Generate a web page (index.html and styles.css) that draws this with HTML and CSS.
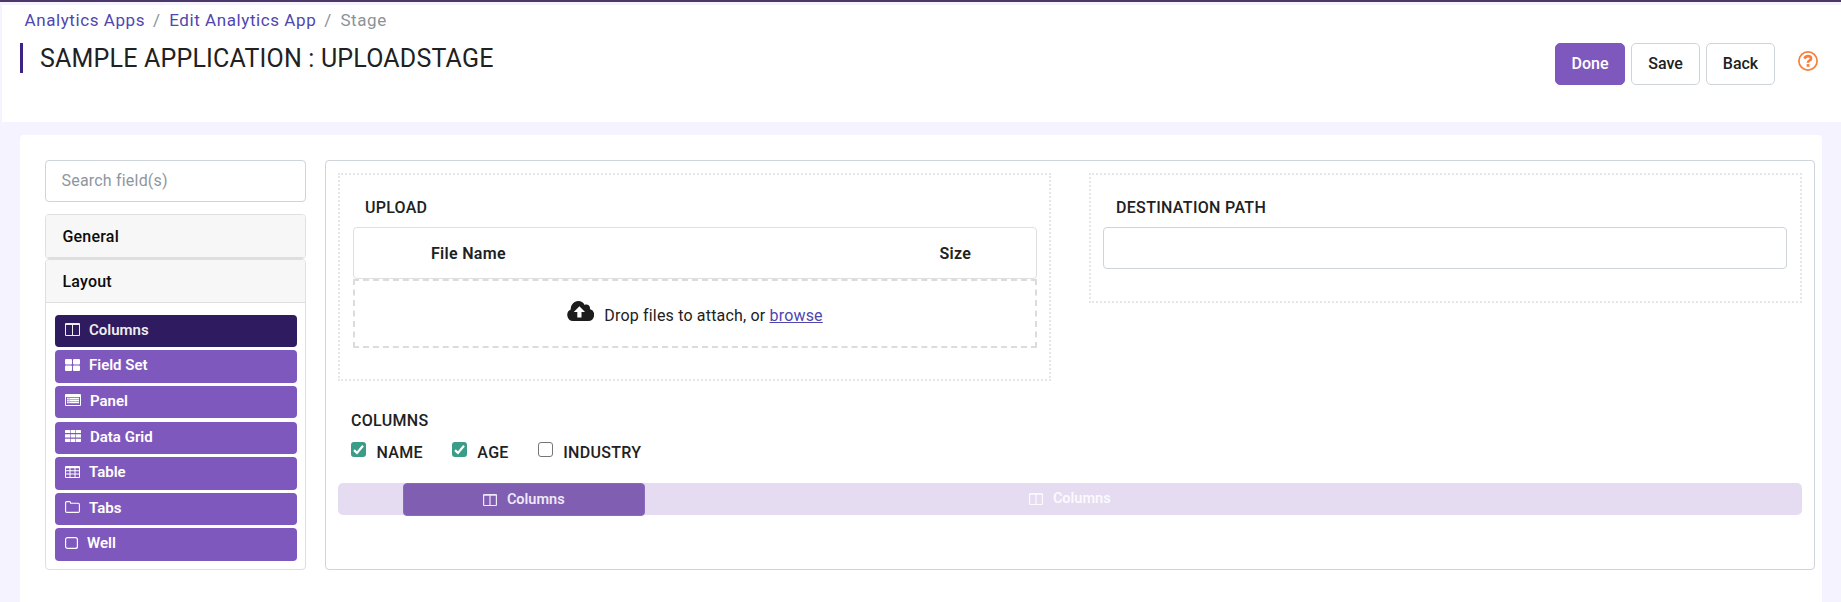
FILE: index.html
```html
<!DOCTYPE html>
<html lang="en">
<head>
<meta charset="utf-8">
<title>Edit Analytics App</title>
<link rel="stylesheet" href="styles.css">
</head>
<body>
<svg class="sprite" xmlns="http://www.w3.org/2000/svg">
  <symbol id="i-columns" viewBox="0 0 15 13"><path fill-rule="evenodd" d="M1 0h13a1 1 0 0 1 1 1v11a1 1 0 0 1-1 1H1a1 1 0 0 1-1-1V1a1 1 0 0 1 1-1zM1 2v10h6V2zM8 2v10h6V2z"/></symbol>
  <symbol id="i-columns-sm" viewBox="0 0 14 12"><path fill-rule="evenodd" d="M1 0h12a1 1 0 0 1 1 1v10a1 1 0 0 1-1 1H1a1 1 0 0 1-1-1V1a1 1 0 0 1 1-1zM1.200 1.800V11h5.200V1.800zM7.600 1.800V11h5.200V1.800z"/></symbol>
  <symbol id="i-fieldset" viewBox="0 0 15 12"><rect width="7" height="5.6" rx="1"/><rect x="8" width="7" height="5.6" rx="1"/><rect y="6.4" width="7" height="5.6" rx="1"/><rect x="8" y="6.4" width="7" height="5.6" rx="1"/></symbol>
  <symbol id="i-panel" viewBox="0 0 16 12"><path fill-rule="evenodd" d="M1 0h14a1 1 0 0 1 1 1v10a1 1 0 0 1-1 1H1a1 1 0 0 1-1-1V1a1 1 0 0 1 1-1zM1 3v8h14V3z"/><path d="M2.2 4h1.3v1H2.200zM4.500 4h9.500v1H4.500zM2.200 6h1.300v1H2.200zM4.500 6h9.500v1H4.500zM2.200 8h1.300v1H2.200zM4.500 8h9.500v1H4.500z"/><path opacity=".5" d="M2 3.500h12v6H2z"/></symbol>
  <symbol id="i-grid" viewBox="0 0 16 12"><path d="M0 .5 .5 0h4l.5.5v2.600H0zM5.600 0h4.800v3.100H5.600zM11 0h4.500l.5.5v2.600h-5zM0 4.300h5v3.200H0zM5.600 4.300h4.800v3.200H5.600zM11 4.300h5v3.200h-5zM0 8.700h5V12H.5L0 11.500zM5.600 8.700h4.800V12H5.600zM11 8.700h5v2.800l-.5.5H11z"/></symbol>
  <symbol id="i-table" viewBox="0 0 15 12"><path fill-rule="evenodd" d="M1 0h13a1 1 0 0 1 1 1v10a1 1 0 0 1-1 1H1a1 1 0 0 1-1-1V1a1 1 0 0 1 1-1zM1 2.200v2.100h3.500V2.200zM5.500 2.200v2.100h4V2.200zM10.500 2.200v2.100H14V2.200zM1 5.300v2.200h3.500V5.300zM5.500 5.300v2.200h4V5.300zM10.500 5.300v2.200H14V5.300zM1 8.500V11h3.500V8.500zM5.500 8.500V11h4V8.500zM10.500 8.500V11H14V8.500z"/></symbol>
  <symbol id="i-tabs" viewBox="0 0 15 12"><path fill="none" stroke="currentColor" stroke-width="1.100" d="M.6 1.800Q.6.600 1.800.6h2.600q1.200 0 1.200 1.200v.4h7.600q1.200 0 1.200 1.200v6.800q0 1.200-1.200 1.200H1.800Q.6 11.400.6 10.200z"/></symbol>
  <symbol id="i-well" viewBox="0 0 13 12"><rect x=".6" y=".6" width="11.800" height="10.800" rx="2" fill="none" stroke="currentColor" stroke-width="1.200"/></symbol>
</svg>

<header class="header">
  <div class="heading">
    <nav class="crumbs"><a href="#">Analytics Apps</a><span class="sep">/</span><a href="#">Edit Analytics App</a><span class="sep">/</span><span>Stage</span></nav>
    <h1 class="title"><span>SAMPLE APPLICATION : UPLOADSTAGE</span></h1>
  </div>
  <div class="actions">
    <button class="btn primary">Done</button>
    <button class="btn">Save</button>
    <button class="btn">Back</button>
    <svg class="help" viewBox="0 0 20 20"><circle cx="10" cy="10" r="9.100" fill="none" stroke="currentColor" stroke-width="1.700"/><path fill="none" stroke="currentColor" stroke-width="2.700" d="M6.400 7.600Q7.600 5.200 10 5.200q3 0 3 2.200 0 1.300-1.700 2.200-1.300.7-1.300 2.200"/><path fill="currentColor" d="M8.600 13.100h2.900v2.700H8.600z"/></svg>
  </div>
</header>

<main class="card">
  <aside class="sidebar">
    <input class="search" type="text" placeholder="Search field(s)">
    <section class="group"><h2 class="group-head">General</h2></section>
    <section class="group open">
      <h2 class="group-head">Layout</h2>
      <div class="items">
        <div class="item active"><svg class="w15 h13"><use href="#i-columns"/></svg>Columns</div>
        <div class="item"><svg class="w15"><use href="#i-fieldset"/></svg>Field Set</div>
        <div class="item"><svg class="w16"><use href="#i-panel"/></svg>Panel</div>
        <div class="item"><svg class="w16"><use href="#i-grid"/></svg>Data Grid</div>
        <div class="item"><svg class="w15"><use href="#i-table"/></svg>Table</div>
        <div class="item"><svg class="w15"><use href="#i-tabs"/></svg>Tabs</div>
        <div class="item"><svg class="w13"><use href="#i-well"/></svg>Well</div>
      </div>
    </section>
  </aside>

  <section class="canvas">
    <div class="row">
      <div class="cell upload">
        <div class="label">UPLOAD</div>
        <div class="files"><span class="file-name">File Name</span><span class="size">Size</span></div>
        <div class="drop">
          <svg class="cloud" viewBox="0 0 27 20"><path fill-rule="evenodd" d="M6 20a6 6 0 0 1-2.300-11.400C3.700 3.500 7 0 11.200 0c2.900 0 5.200 1.400 6.500 3.900 3-1.300 6 1.100 5.200 4.200A6.100 6.100 0 0 1 21.300 20zM12.400 5.300 6.800 11H10.300v5.600h4.200V11H18z"/></svg>
          <span>Drop files to attach, or <a href="#">browse</a></span>
        </div>
      </div>
      <div class="cell">
        <div class="label wide">DESTINATION PATH</div>
        <input class="path" type="text">
      </div>
    </div>
    <div class="columns-label">COLUMNS</div>
    <div class="checks">
      <label><span class="box on"><svg viewBox="0 0 15 15"><path d="M3 8.100 6 11 12 3.800"/></svg></span>NAME</label>
      <label><span class="box on"><svg viewBox="0 0 15 15"><path d="M3 8.100 6 11 12 3.800"/></svg></span>AGE</label>
      <label><span class="box"></span>INDUSTRY</label>
    </div>
    <div class="target">
      <div class="ghost"><svg><use href="#i-columns-sm"/></svg>Columns</div>
      <div class="dragged"><svg><use href="#i-columns-sm"/></svg>Columns</div>
    </div>
  </section>
</main>
</body>
</html>
```

FILE: styles.css
```css
* { box-sizing: border-box; }

body {
  margin: 0;
  height: 602px;
  overflow: hidden;
  background: #f5f3ff;
  border-top: 2px solid #4b3869;
  font: 16px/24px Roboto, sans-serif;
  color: #212121;
}

.sprite { position: absolute; width: 0; height: 0; }
a { color: #5046af; }

.header {
  display: flex;
  justify-content: space-between;
  height: 117px;
  margin: 3px 0 0 2px;
  padding: 3px 23px 0 18px;
  background: #fff;
}
.crumbs {
  display: flex;
  padding-left: 4.5px;
  font-size: 17px;
  letter-spacing: 0.58px;
  color: #8b9298;
}
.crumbs a { text-decoration: none; }
.sep { padding: 0 8.500px 0 8px; }
.title {
  display: flex;
  height: 30px;
  margin: 11px 0 0;
  padding-left: 17px;
  border-left: 3px solid #3b2483;
  font-size: 25px;
  font-weight: 400;
  line-height: 32px;
  letter-spacing: 0.19px;
}

.actions { display: flex; align-items: flex-start; gap: 6px; padding-top: 35px; }
.btn {
  width: 69px;
  height: 42px;
  padding: 0;
  border: 1px solid #ced4da;
  border-radius: 5px;
  background: #fff;
  color: #212121;
  font: 500 16px/24px Roboto, sans-serif;
}
.btn.primary { width: 70px; border-color: #7f58be; background: #7f58be; color: #fff; }
.help { width: 20px; height: 20px; margin: 8px 0 0 17px; color: #f87f3b; }

.card {
  display: flex;
  gap: 19px;
  height: 480px;
  margin: 13px 19px 0 20px;
  padding: 25px 7px 0 25px;
  border-radius: 4px 4px 0 0;
  background: #fff;
}
.sidebar { width: 261px; height: 410px; flex: none; display: flex; flex-direction: column; }
.search {
  height: 42px;
  margin-bottom: 12px;
  padding: 0 15.5px 2px;
  border: 1px solid #ced4da;
  border-radius: 4px;
  font: 16px/24px Roboto, sans-serif;
  letter-spacing: 0.2px;
}
.search::placeholder { color: #8f969d; }
.group { border: 1px solid #dfdfdf; border-radius: 4px; overflow: hidden; }
.group-head {
  height: 43px;
  margin: 0;
  padding: 10px 16.5px 0;
  background: #f7f7f7;
  border-bottom: 1px solid #dfdfdf;
  font-size: 16px;
  font-weight: 500;
  letter-spacing: 0.2px;
  color: #0c0c0c;
}
.group.open { flex: 1; }
.items { display: flex; flex-direction: column; gap: 3.2px; padding: 11.8px 8px 0 9px; }
.item {
  display: flex;
  align-items: center;
  height: 32.4px;
  padding: 0 10px 2.4px;
  border-radius: 4px;
  background: #7f58be;
  color: #fff;
  font-size: 15px;
  font-weight: 600;
}
.item.active { background: #2e1b60; color: #eee; }
.item svg { height: 12px; margin: -1px 9px 0 0; fill: currentColor; }
.item svg.h13 { height: 13px; }
.w13 { width: 13px; }
.w15 { width: 15px; }
.w16 { width: 16px; }

.canvas {
  flex: 1;
  height: 410px;
  padding: 12px;
  border: 1px solid #ced4da;
  border-radius: 4px;
}
.row { display: grid; grid-template-columns: 713px 713px; gap: 38px; align-items: start; }
.cell { height: 130px; padding: 20px 12px 0 13px; border: 2px dotted #e6e6e6; }
.cell.upload { height: 208px; }
.label { height: 32px; padding-left: 12px; font-weight: 500; line-height: 26px; letter-spacing: 0.25px; }
.label.wide { padding-left: 13px; letter-spacing: 0.32px; }
.path { display: block; width: 684px; height: 42px; border: 1px solid #ced4da; border-radius: 4px; }
.cell:not(.upload) { padding-left: 12px; }
.files {
  display: grid;
  grid-template-columns: 508.500px 1fr;
  height: 52px;
  padding: 14px 0 0 77px;
  border: 1px solid #dfdfdf;
  border-radius: 4px;
  font-weight: 600;
  letter-spacing: 0.3px;
}
.drop {
  display: flex;
  justify-content: center;
  gap: 10px;
  height: 69px;
  padding-top: 23px;
  border: 2px dashed #dcdcdc;
  letter-spacing: 0.18px;
}
.cloud { width: 27px; height: 20px; margin-top: -3px; fill: #1c1c1c; }

.columns-label { margin: 28px 0 0 13px; font-weight: 500; letter-spacing: 0.3px; }
.checks { display: flex; gap: 29px; height: 42px; margin: 8px 0 0 13px; font-weight: 500; letter-spacing: 0.3px; }
.checks label { display: flex; gap: 10.500px; }
.box {
  width: 15px;
  height: 15px;
  margin-top: 1px;
  border: 1px solid #767676;
  border-radius: 3px;
}
.box.on { border: 0; background: #3b9c87; }
.box svg { display: block; width: 15px; height: 15px; fill: none; stroke: #fff; stroke-width: 2.2; }

.target { position: relative; height: 32px; border-radius: 5px; background: #e5dcf1; }
.ghost, .dragged {
  display: flex;
  align-items: center;
  justify-content: center;
  gap: 9.500px;
  font-size: 14.500px;
  font-weight: 600;
}
.ghost { height: 31px; color: #fbf9fe; }
.ghost svg, .dragged svg { width: 14px; height: 12px; fill: currentColor; }
.dragged {
  position: absolute;
  left: 65px;
  top: 0;
  width: 242px;
  height: 33px;
  border: 1px solid #8a68bb;
  border-radius: 4px;
  background: #805eb1;
  color: #efe8f8;
}
```
